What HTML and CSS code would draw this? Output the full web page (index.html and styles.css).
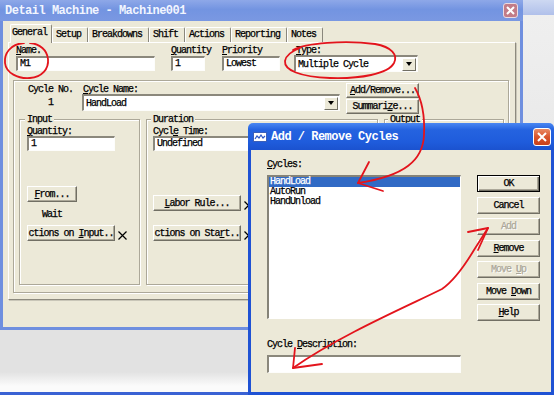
FILE: index.html
```html
<!DOCTYPE html>
<html lang="en">
<head>
  <meta charset="UTF-8" />
  <title>Detail Machine - Machine001</title>
  <link rel="stylesheet" href="styles.css">
</head>
<body>
  <div class="desktop">
    <div class="back-window">
      <div class="back-title"></div>
      <div class="back-body"></div>
    </div>

    <div class="main-window">
      <div class="titlebar">
        <span class="title">Detail Machine - Machine001</span>
        <span class="close">
          <svg width="9" height="9" viewBox="0 0 9 9"><path d="M1 1L8 8M8 1L1 8" stroke="#fff" stroke-width="2"/></svg>
        </span>
      </div>
      <div class="win-body">
        <div class="tabs">
          <span class="tab active">General</span>
          <span class="tab">Setup</span>
          <span class="tab">Breakdowns</span>
          <span class="tab">Shift</span>
          <span class="tab">Actions</span>
          <span class="tab">Reporting</span>
          <span class="tab">Notes</span>
        </div>
        <div class="tab-panel">
          <div class="fields">
            <div class="field f-name">
              <label><u>N</u>ame.</label>
              <div class="edit">M1</div>
            </div>
            <div class="field f-qty">
              <label><u>Q</u>uantity</label>
              <div class="edit">1</div>
            </div>
            <div class="field f-prio">
              <label><u>P</u>riority</label>
              <div class="edit">Lowest</div>
            </div>
            <div class="field f-type">
              <label><u>T</u>ype:</label>
              <div class="combo"><span>Multiple Cycle</span><span class="drop"></span></div>
            </div>
          </div>

          <div class="group cycle-group">
            <div class="cycle-top">
              <div class="cycle-no">
                <div>Cycle No.</div>
                <div class="cycle-num">1</div>
              </div>
              <div class="cycle-name">
                <label><u>C</u>ycle Name:</label>
                <div class="combo"><span>HandLoad</span><span class="drop"></span></div>
              </div>
              <div class="cycle-btns">
                <button class="btn"><u>A</u>dd/Remove...</button>
                <button class="btn">Summari<u>z</u>e...</button>
              </div>
            </div>

            <div class="sub-groups">
              <div class="group sub input-group">
                <span class="legend">Input</span>
                <label class="sub-label"><u>Q</u>uantity:</label>
                <div class="edit">1</div>
                <button class="btn from-btn"><u>F</u>rom...</button>
                <div class="wait">Wait</div>
                <div class="act-row">
                  <button class="btn act-btn">ctions on <u>I</u>nput..</button>
                  <svg class="x-mark" width="9" height="9" viewBox="0 0 9 9"><path d="M0.5 0.5L8.5 8.5M8.5 0.5L0.5 8.5" stroke="#000" stroke-width="1.2"/></svg>
                </div>
              </div>

              <div class="group sub duration-group">
                <span class="legend">Duration</span>
                <label class="sub-label">Cycl<u>e</u> Time:</label>
                <div class="edit">Undefined</div>
                <div class="act-row labor-row">
                  <button class="btn act-btn"><u>L</u>abor Rule...</button>
                  <svg class="x-mark" width="9" height="9" viewBox="0 0 9 9"><path d="M0.5 0.5L8.5 8.5M8.5 0.5L0.5 8.5" stroke="#000" stroke-width="1.2"/></svg>
                </div>
                <div class="act-row start-row">
                  <button class="btn act-btn">ctions on Sta<u>r</u>t..</button>
                  <svg class="x-mark" width="9" height="9" viewBox="0 0 9 9"><path d="M0.5 0.5L8.5 8.5M8.5 0.5L0.5 8.5" stroke="#000" stroke-width="1.2"/></svg>
                </div>
              </div>

              <div class="group sub output-group">
                <span class="legend">Output</span>
              </div>
            </div>
          </div>
        </div>
      </div>
    </div>

    <div class="dialog">
      <div class="titlebar">
        <span class="dlg-caption">
          <svg class="dlg-icon" width="14" height="10" viewBox="0 0 14 10">
            <rect x="0.5" y="0.5" width="13" height="9" fill="#fff" stroke="#3a5fb8"/>
            <path d="M2 7L4 4L6 6L8 3L10 6L12 4" fill="none" stroke="#2c57c6" stroke-width="1.2"/>
          </svg>
          <span class="title">Add / Remove Cycles</span>
        </span>
        <span class="close">
          <svg width="10" height="10" viewBox="0 0 10 10"><path d="M1 1L9 9M9 1L1 9" stroke="#fff" stroke-width="2"/></svg>
        </span>
      </div>
      <div class="dlg-body">
        <div class="dlg-left">
          <label><u>C</u>ycles:</label>
          <div class="listbox">
            <div class="selected">HandLoad</div>
            <div>AutoRun</div>
            <div>HandUnload</div>
          </div>
          <label class="desc-label">Cycle <u>D</u>escription:</label>
          <div class="edit desc-edit"></div>
        </div>
        <div class="dlg-btns">
          <button class="btn default">OK</button>
          <button class="btn">Cancel</button>
          <button class="btn disabled">Add</button>
          <button class="btn"><u>R</u>emove</button>
          <button class="btn disabled">Move <u>U</u>p</button>
          <button class="btn">Move <u>D</u>own</button>
          <button class="btn"><u>H</u>elp</button>
        </div>
      </div>
    </div>

    <svg class="marks" width="554" height="395" viewBox="0 0 554 395">
      <g fill="none" stroke="#e3141c" stroke-width="1.8" stroke-linecap="round" stroke-linejoin="round">
        <path d="M24 43C10 44 4 54 5 63C6 73 18 79 30 78C42 77 49 69 48 59C47 50 40 44 30 43"/>
        <path d="M293 50C305 43 345 40 375 44C392 47 398 55 394 63C388 74 360 79 330 78C300 77 284 70 285 61C286 55 292 51 300 48"/>
        <path d="M415 88C422 100 425 115 424 135C423 160 405 176 358 183"/>
        <path d="M369 162L358 183L383 191"/>
        <path d="M488 228L474 250C465 265 455 280 442 289C410 305 340 335 293 368"/>
        <path d="M468 232L488 228L478 250"/>
        <path d="M295 348L293 368L322 364"/>
      </g>
    </svg>
  </div>
</body>
</html>
```

FILE: styles.css
```css
* {
  box-sizing: border-box;
}
body {
  margin: 0;
  font-family: "Liberation Mono", "DejaVu Sans Mono", monospace;
  font-size: 10px;
  letter-spacing: -1px;
  color: #000;
  -webkit-text-stroke: 0.25px currentColor;
}
.desktop {
  position: relative;
  width: 554px;
  height: 395px;
  overflow: hidden;
}

/* window behind */
.back-window {
  position: absolute;
  inset: 0;
  display: flex;
  flex-direction: column;
}
.back-title {
  height: 15px;
  background: linear-gradient(#cdd8f2, #b0c0ea);
}
.back-body {
  flex: 1;
  background: linear-gradient(#efefef 0, #e2e2e2 300px, #e2e2e2 357px, #fbfbfb 371px);
  border-bottom: 3px solid #3a62d4;
}

/* title bars */
.titlebar {
  display: flex;
  align-items: center;
  justify-content: space-between;
  flex: none;
}
.title {
  font-size: 12px;
  font-weight: bold;
  letter-spacing: -0.5px;
  color: #fff;
  white-space: nowrap;
  -webkit-text-stroke: 0;
}
.close {
  display: flex;
  align-items: center;
  justify-content: center;
  border: 1px solid #fff;
  border-radius: 3px;
}

/* main window */
.main-window {
  position: absolute;
  left: 0;
  top: 0;
  width: 523px;
  height: 330px;
  display: flex;
  flex-direction: column;
}
.main-window .titlebar {
  height: 21px;
  padding: 0 5px;
  background: linear-gradient(#8ea8e8, #7394e1 45%, #7a98e2);
}
.main-window .title {
  color: #f2f5ff;
}
.main-window .close {
  width: 15px;
  height: 15px;
  background: #c27c88;
  border-color: #eadbe2;
}
.win-body {
  flex: 1;
  background: #ece9d8;
  border: solid #6f8fdf;
  border-width: 0 3px 3px;
  padding: 3px 4px 0 5px;
}

.tabs {
  display: flex;
  align-items: flex-end;
  height: 18px;
  padding-left: 2px;
}
.tab {
  height: 15px;
  line-height: 13px;
  padding: 0 6px 0 3px;
  border: 1px solid;
  border-bottom: 0;
  border-color: #fff #8a877c #fff #fff;
  border-radius: 2px 2px 0 0;
  white-space: nowrap;
}
.tab.active {
  height: 19px;
  margin-bottom: -1px;
  padding: 0 4px 0 1px;
  line-height: 16px;
  background: #ece9d8;
  position: relative;
  z-index: 1;
}
.tab-panel {
  height: 258px;
  border: 1px solid;
  border-color: #fff #8d8a7e #8d8a7e #fff;
  box-shadow: 1px 1px 0 #c9c6b8;
  padding: 2px 0 0 4px;
}

/* fields */
.fields {
  display: flex;
  padding-left: 3px;
}
label {
  display: block;
  height: 11px;
  line-height: 11px;
  white-space: nowrap;
}
.f-name { width: 139px; }
.f-qty { width: 34px; margin-left: 16px; }
.f-prio { width: 58px; margin-left: 17px; }
.f-type { width: 124px; margin-left: 14px; }
.f-type label { padding-left: 2px; }
.f-type .combo { margin-top: -1px; }

.edit {
  height: 15px;
  background: #fff;
  border-style: solid;
  border-width: 2px 1px 1px 2px;
  border-color: #8b887c #fdfdfb #fdfdfb #8b887c;
  padding-left: 2px;
  line-height: 12px;
  white-space: nowrap;
  overflow: hidden;
}
.combo {
  display: flex;
  align-items: center;
  justify-content: space-between;
  height: 17px;
  padding: 0 1px 0 2px;
  background: #fff;
  border-style: solid;
  border-width: 2px 1px 1px 2px;
  border-color: #8b887c #fdfdfb #fdfdfb #8b887c;
  white-space: nowrap;
}
.drop {
  display: flex;
  align-items: center;
  justify-content: center;
  width: 14px;
  height: 13px;
  background: #ece9d8;
  border: 1px solid;
  border-color: #fff #716f64 #716f64 #fff;
}
.drop::after {
  content: "";
  border: 3.5px solid transparent;
  border-top: 4px solid #000;
  border-bottom: 0;
}

/* group boxes */
.group {
  border: 1px solid #aca899;
  box-shadow: inset 1px 1px 0 #fff, 1px 1px 0 #fff;
}
.cycle-group {
  margin-top: 8px;
  width: 496px;
  height: 213px;
}
.cycle-top {
  display: flex;
  height: 38px;
  padding: 2px 0 0 14px;
}
.cycle-no {
  width: 45px;
  padding-top: 1px;
  text-align: center;
  line-height: 11px;
  white-space: nowrap;
}
.cycle-num {
  margin-top: 2px;
}
.cycle-name {
  width: 258px;
  margin-left: 9px;
  padding-top: 1px;
}
.cycle-name label { padding-left: 1px; }
.cycle-name .combo { margin-top: -1px; }
.cycle-btns {
  display: flex;
  flex-direction: column;
  gap: 1px;
  width: 73px;
  margin-left: 6px;
}
.cycle-btns .btn { height: 15px; }

.btn {
  display: block;
  padding: 0;
  font: inherit;
  letter-spacing: inherit;
  text-align: center;
  color: #000;
  background: #ece9d8;
  border: 1px solid;
  border-color: #fff #716f64 #716f64 #fff;
  box-shadow: inset -1px -1px 0 #aca899;
  white-space: nowrap;
  overflow: hidden;
}

.sub-groups {
  display: flex;
  gap: 6px;
  padding-left: 5px;
}
.sub {
  height: 166px;
  padding-left: 7px;
}
.input-group { width: 121px; }
.duration-group { width: 232px; padding-left: 6px; }
.output-group { width: 120px; padding-left: 5px; }
.legend {
  display: block;
  width: max-content;
  height: 11px;
  line-height: 11px;
  margin: -6px 0 0 -2px;
  padding: 0 2px;
  background: #ece9d8;
}
.sub-label {
  margin-top: 1px;
}
.sub .edit {
  width: 88px;
  margin-top: -1px;
}
.duration-group .edit {
  width: 120px;
}
.from-btn {
  width: 50px;
  height: 16px;
  margin-top: 35px;
}
.wait {
  height: 11px;
  line-height: 11px;
  margin-top: 7px;
  padding-left: 15px;
}
.act-row {
  display: flex;
  align-items: flex-end;
  margin-top: 5px;
}
.act-btn {
  width: 88px;
  height: 16px;
}
.x-mark {
  flex: none;
  margin: 0 0 1px 3px;
}
.labor-row { margin-top: 44px; }
.start-row { margin-top: 14px; }

/* dialog */
.dialog {
  position: absolute;
  left: 248px;
  top: 123px;
  width: 306px;
  height: 272px;
  display: flex;
  flex-direction: column;
}
.dialog .titlebar {
  height: 27px;
  padding: 0 3px 0 5px;
  border-radius: 5px 5px 0 0;
  background: linear-gradient(#4a87f2, #2563e0 25%, #1f5cdc 70%, #1b52cf);
}
.dlg-caption {
  display: flex;
  align-items: center;
  gap: 4px;
}
.dialog .close {
  width: 18px;
  height: 18px;
  background: linear-gradient(#e98a64, #d9542c 50%, #c8401c);
}
.dlg-body {
  flex: 1;
  display: flex;
  gap: 16px;
  background: #ece9d8;
  border: solid #1f52d4;
  border-width: 0 3px 3px;
  padding: 9px 0 0 16px;
}
.dlg-left {
  width: 194px;
}
.listbox {
  height: 144px;
  margin-top: 5px;
  background: #fff;
  border-style: solid;
  border-width: 2px 1px 1px 2px;
  border-color: #858378 #fff #fff #858378;
}
.listbox div {
  height: 10px;
  line-height: 10px;
  padding-left: 1px;
  white-space: nowrap;
}
.listbox .selected {
  background: #316ac5;
  color: #fff;
}
.desc-label {
  margin-top: 20px;
}
.desc-edit {
  height: 18px;
  margin-top: 5px;
}
.dlg-btns {
  display: flex;
  flex-direction: column;
  gap: 4.5px;
  width: 63px;
  padding-top: 16px;
}
.dlg-btns .btn {
  height: 17px;
}
.btn.default {
  border-color: #000;
  box-shadow: inset 1px 1px 0 #fff, inset -1px -1px 0 #716f64, inset -2px -2px 0 #aca899;
}
.btn.disabled {
  color: #aca899;
  text-shadow: 1px 1px 0 #fff;
}

/* red annotations */
.marks {
  position: absolute;
  left: 0;
  top: 0;
  pointer-events: none;
}
```
